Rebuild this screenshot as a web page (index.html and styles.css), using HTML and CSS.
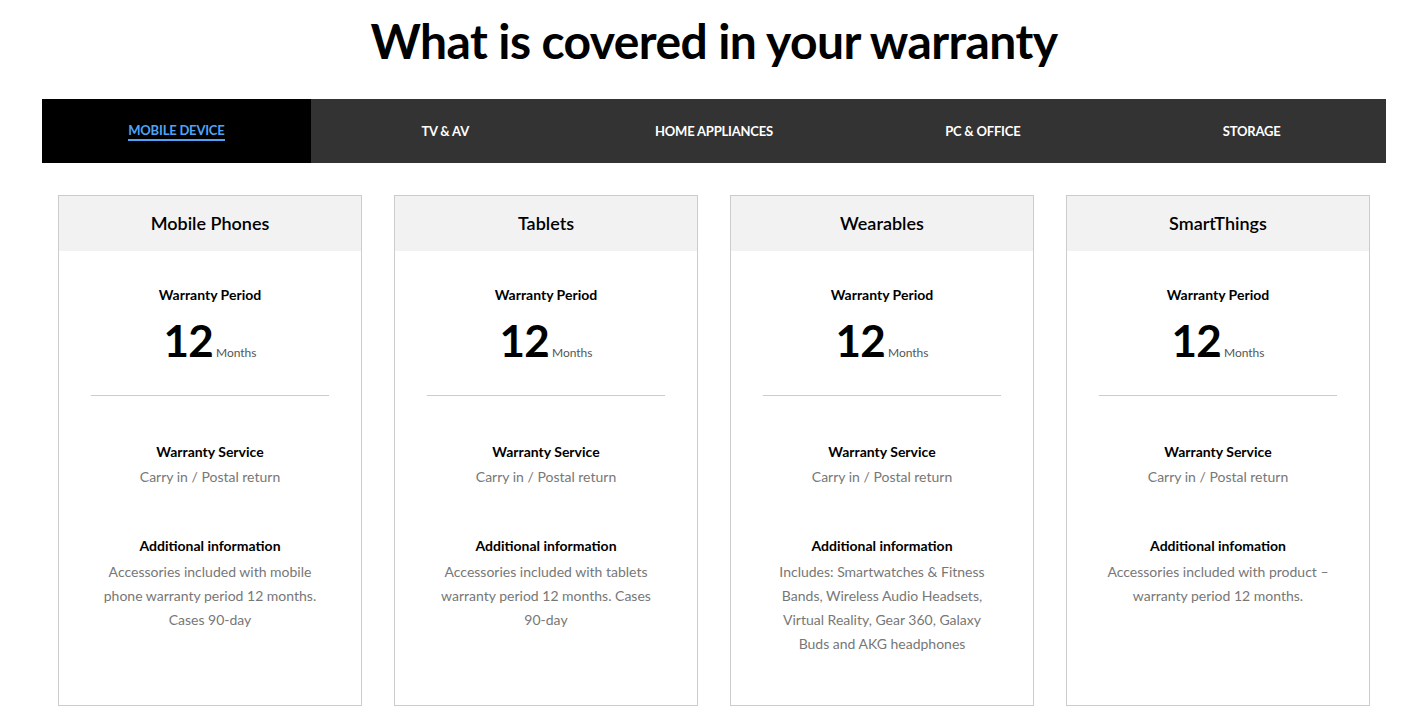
FILE: index.html
```html
<!DOCTYPE html>
<html lang="en">
<head>
<meta charset="utf-8">
<title>Warranty</title>
<link rel="stylesheet" href="styles.css">
</head>
<body>
<main class="page">
  <h1 class="title">What is covered in your warranty</h1>
  <nav class="tabs">
    <div class="tab active"><span>MOBILE DEVICE</span></div>
    <div class="tab"><span>TV &amp; AV</span></div>
    <div class="tab"><span>HOME APPLIANCES</span></div>
    <div class="tab"><span>PC &amp; OFFICE</span></div>
    <div class="tab"><span>STORAGE</span></div>
  </nav>
  <section class="cards">
    <article class="card">
      <header class="card-head">Mobile Phones</header>
      <div class="card-body">
        <div class="label">Warranty Period</div>
        <div class="period"><span class="num">12</span><span class="unit">Months</span></div>
        <hr class="divider">
        <div class="label service">Warranty Service</div>
        <div class="text">Carry in / Postal return</div>
        <div class="label extra">Additional information</div>
        <div class="text info">Accessories included with mobile phone warranty period 12 months. Cases 90&#8209;day</div>
      </div>
    </article>
    <article class="card">
      <header class="card-head">Tablets</header>
      <div class="card-body">
        <div class="label">Warranty Period</div>
        <div class="period"><span class="num">12</span><span class="unit">Months</span></div>
        <hr class="divider">
        <div class="label service">Warranty Service</div>
        <div class="text">Carry in / Postal return</div>
        <div class="label extra">Additional information</div>
        <div class="text info">Accessories included with tablets warranty period 12 months. Cases 90&#8209;day</div>
      </div>
    </article>
    <article class="card">
      <header class="card-head">Wearables</header>
      <div class="card-body">
        <div class="label">Warranty Period</div>
        <div class="period"><span class="num">12</span><span class="unit">Months</span></div>
        <hr class="divider">
        <div class="label service">Warranty Service</div>
        <div class="text">Carry in / Postal return</div>
        <div class="label extra">Additional information</div>
        <div class="text info">Includes: Smartwatches &amp; Fitness Bands, Wireless Audio Headsets, Virtual Reality, Gear 360, Galaxy Buds and AKG headphones</div>
      </div>
    </article>
    <article class="card">
      <header class="card-head">SmartThings</header>
      <div class="card-body">
        <div class="label">Warranty Period</div>
        <div class="period"><span class="num">12</span><span class="unit">Months</span></div>
        <hr class="divider">
        <div class="label service">Warranty Service</div>
        <div class="text">Carry in / Postal return</div>
        <div class="label extra">Additional infomation</div>
        <div class="text info wide">Accessories included with product&nbsp;– warranty period 12 months.</div>
      </div>
    </article>
  </section>
</main>
</body>
</html>
```

FILE: styles.css
```css
* { box-sizing: border-box; }
html, body { margin: 0; padding: 0; background: #fff; }
body {
  font-family: Lato, "Open Sans", "Liberation Sans", sans-serif;
  color: #000;
}
.page {
  width: 1344px;
  margin-left: 42px;
}
.title {
  margin: 0;
  height: 99px;
  padding-top: 12px;
  text-align: center;
  font-size: 48px;
  font-weight: 700;
  line-height: 58px;
  letter-spacing: -0.6px;
}
.tabs {
  display: grid;
  grid-template-columns: repeat(5, 1fr);
  height: 64px;
  background: #333;
}
.tab {
  display: flex;
  align-items: center;
  justify-content: center;
  color: #fff;
  font-size: 13px;
  font-weight: 700;
  letter-spacing: -0.2px;
}
.tab span { padding-bottom: 1px; }
.tab.active { background: #000; color: #4fa3f7; }
.tab.active span {
  padding-bottom: 1px;
  border-bottom: 2px solid #4fa3f7;
  margin-top: 1px;
}
.cards {
  display: grid;
  grid-template-columns: repeat(4, 304px);
  gap: 32px;
  padding: 32px 16px 0;
}
.card {
  border: 1px solid #ccc;
  height: 511px;
  display: flex;
  flex-direction: column;
}
.card-head {
  height: 55px;
  background: #f2f2f2;
  display: flex;
  align-items: center;
  justify-content: center;
  font-size: 18px;
  font-weight: 600;
  color: #000;
  padding-bottom: 1px;
}
.card-body {
  padding: 0 32px;
  text-align: center;
}
.label {
  font-size: 14px;
  font-weight: 700;
  line-height: 20px;
  margin-top: 34px;
}
.label.service { margin-top: 46px; }
.label.extra { margin-top: 47px; }
.period {
  display: flex;
  justify-content: center;
  align-items: baseline;
  margin-top: 10px;
  height: 50px;
}
.num {
  font-size: 44px;
  font-weight: 700;
  line-height: 50px;
  letter-spacing: -0.8px;
}
.unit {
  font-size: 12px;
  color: #555;
  margin-left: 3px;
}
.divider {
  margin: 30px 0 0;
  border: 0;
  border-top: 1px solid #ccc;
}
.text {
  font-size: 14px;
  line-height: 24px;
  color: #777;
  margin-top: 3px;
  padding: 0 9px;
}
.text.info { margin-top: 4px; }
.text.wide { padding: 0; }
```
